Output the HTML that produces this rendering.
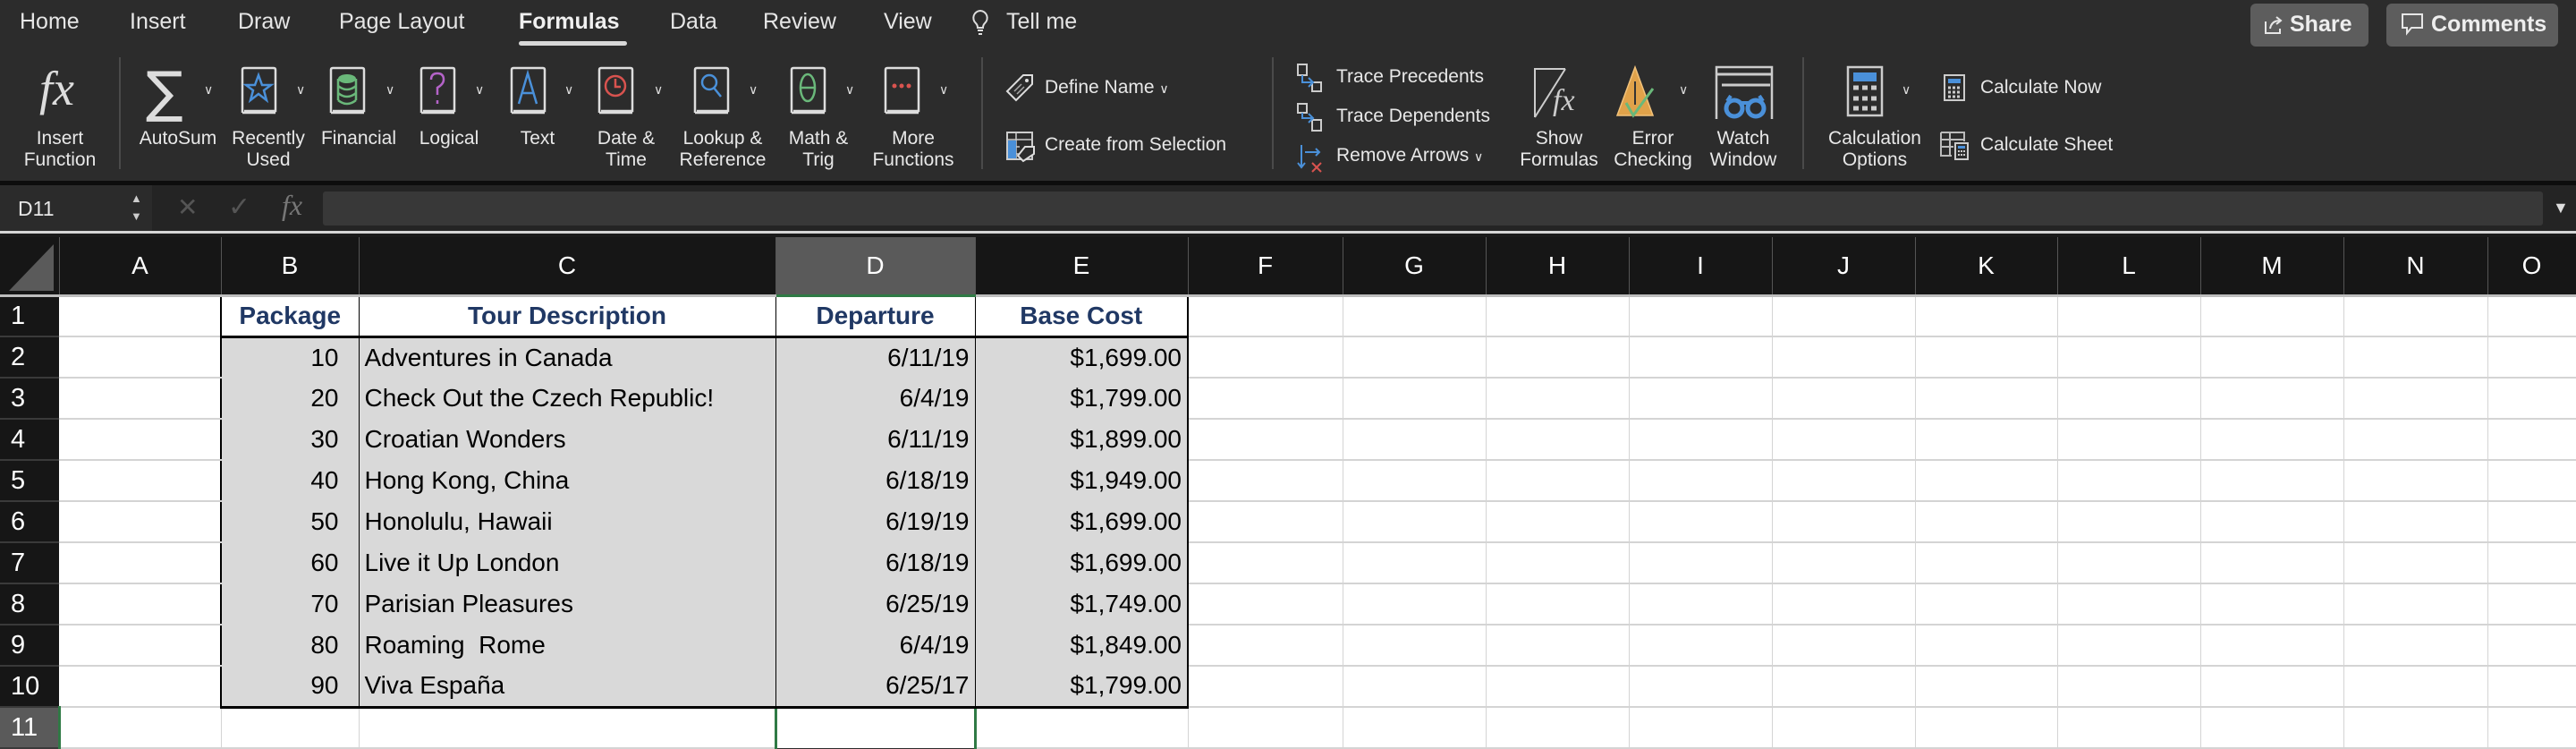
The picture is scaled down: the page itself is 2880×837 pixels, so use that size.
<!DOCTYPE html>
<html><head><meta charset="utf-8"><style>
*{margin:0;padding:0;box-sizing:border-box}
body{width:2880px;height:833px;overflow:hidden;background:#2c2c2c;font-family:"Liberation Sans",sans-serif;position:relative}
.a{position:absolute}
.tab{position:absolute;top:10px;font-size:25px;color:#e6e6e6;white-space:nowrap}
.lbl{position:absolute;font-size:21px;color:#e8e8e8;text-align:center;line-height:24px;white-space:nowrap;transform:translateX(-50%)}
.chev{position:absolute;font-size:14px;color:#ddd}
.sm{position:absolute;font-size:21px;color:#e8e8e8;white-space:nowrap}
.sep{position:absolute;width:2px;background:#4a4a4a;top:64px;height:125px}
table{position:absolute;left:0;top:265px;border-collapse:collapse;table-layout:fixed;width:2880px}
td{height:46px;border-right:1px solid #d4d4d4;border-bottom:2px solid #d4d4d4;background:#fff;font-size:28px;color:#000;padding:0 6px;white-space:nowrap;overflow:hidden}
tr.h td{height:65px;background:#161616;color:#fff;text-align:center;border-right:1px solid #555;border-bottom:3px solid #bdbdbd;font-size:28px}
td.rn{background:#161616;color:#fff;border-right:none;border-bottom:2px solid #3a3a3a;text-align:left;padding-left:12px;font-size:29px}
td.g{background:#d9d9d9;border-bottom:none}
td.r{text-align:right}
td.hd{color:#203864;font-weight:bold;text-align:center;border-bottom:3px solid #000}
</style></head><body>
<!-- tabs -->
<div class="tab" style="left:22px">Home</div>
<div class="tab" style="left:145px">Insert</div>
<div class="tab" style="left:266px">Draw</div>
<div class="tab" style="left:379px">Page Layout</div>
<div class="tab" style="left:580px;font-weight:bold;color:#f0f0f0">Formulas</div>
<div class="a" style="left:580px;top:46px;width:121px;height:5px;border-radius:3px;background:#d8d8d8"></div>
<div class="tab" style="left:749px">Data</div>
<div class="tab" style="left:853px">Review</div>
<div class="tab" style="left:988px">View</div>
<svg class="a" style="left:1085px;top:10px" width="22" height="32" viewBox="0 0 22 32"><path d="M11 2a8 8 0 0 0-5 14c1 1 2 3 2 5h6c0-2 1-4 2-5a8 8 0 0 0-5-14z" fill="none" stroke="#ddd" stroke-width="2"/><path d="M8 24h6M9 28h4" stroke="#ddd" stroke-width="2"/></svg>
<div class="tab" style="left:1125px">Tell me</div>
<div class="a" style="left:2516px;top:4px;width:132px;height:48px;background:#5d5d5d;border-radius:6px"></div>
<svg class="a" style="left:2530px;top:16px" width="24" height="24" viewBox="0 0 24 24"><path d="M3 8v13h16v-5M8 16c1-6 5-9 11-9M15 3l5 4-5 4" fill="none" stroke="#e6e6e6" stroke-width="2"/></svg>
<div class="a" style="left:2560px;top:13px;font-size:25px;font-weight:bold;color:#eee">Share</div>
<div class="a" style="left:2668px;top:4px;width:192px;height:48px;background:#5d5d5d;border-radius:6px"></div>
<svg class="a" style="left:2684px;top:14px" width="26" height="28" viewBox="0 0 26 28"><path d="M2 2h22v15H12l-5 6v-6H2z" fill="none" stroke="#e6e6e6" stroke-width="2"/></svg>
<div class="a" style="left:2718px;top:13px;font-size:25px;font-weight:bold;color:#eee">Comments</div>

<!-- ribbon icons -->
<div class="a" style="left:44px;top:68px;font-family:'Liberation Serif',serif;font-style:italic;font-size:54px;color:#ddd">fx</div>
<div class="lbl" style="left:67px;top:143px">Insert<br>Function</div>
<div class="sep" style="left:133px"></div>
<div class="a" style="left:163px;top:66px;font-size:62px;color:#ddd;font-family:'DejaVu Sans',sans-serif">∑</div>
<div class="chev" style="left:228px;top:92px">∨</div>
<div class="lbl" style="left:199px;top:143px">AutoSum</div>

<svg class="a" style="left:268px;top:74px" width="42" height="56" viewBox="0 0 42 56">
<path d="M3 52V4q0-2 2-2h33q2 0 2 2v46H5M3 52h37" fill="none" stroke="#ddd" stroke-width="2.5"/>
<path d="M21 10l4 11h10l-8 6 3 11-9-7-9 7 3-11-8-6h10z" fill="none" stroke="#4a90d9" stroke-width="2.5"/></svg>
<div class="chev" style="left:331px;top:92px">∨</div>
<div class="lbl" style="left:300px;top:143px">Recently<br>Used</div>

<svg class="a" style="left:367px;top:74px" width="42" height="56" viewBox="0 0 42 56">
<path d="M3 52V4q0-2 2-2h33q2 0 2 2v46H5M3 52h37" fill="none" stroke="#ddd" stroke-width="2.5"/>
<ellipse cx="21" cy="14" rx="10" ry="5" fill="#6ab87a"/><path d="M11 22q10 8 20 0M11 30q10 8 20 0M11 38q10 8 20 0M11 14v24M31 14v24" fill="none" stroke="#6ab87a" stroke-width="2.5"/></svg>
<div class="chev" style="left:431px;top:92px">∨</div>
<div class="lbl" style="left:401px;top:143px">Financial</div>

<svg class="a" style="left:468px;top:74px" width="42" height="56" viewBox="0 0 42 56">
<path d="M3 52V4q0-2 2-2h33q2 0 2 2v46H5M3 52h37" fill="none" stroke="#ddd" stroke-width="2.5"/>
<path d="M14 15q0-7 7-7t7 7q0 5-7 9v8M21 38v4" fill="none" stroke="#b463c8" stroke-width="2.5"/></svg>
<div class="chev" style="left:531px;top:92px">∨</div>
<div class="lbl" style="left:502px;top:143px">Logical</div>

<svg class="a" style="left:569px;top:74px" width="42" height="56" viewBox="0 0 42 56">
<path d="M3 52V4q0-2 2-2h33q2 0 2 2v46H5M3 52h37" fill="none" stroke="#ddd" stroke-width="2.5"/>
<path d="M11 42L21 8l10 34M14 30h14" fill="none" stroke="#4a90d9" stroke-width="2.5"/></svg>
<div class="chev" style="left:631px;top:92px">∨</div>
<div class="lbl" style="left:601px;top:143px">Text</div>

<svg class="a" style="left:667px;top:74px" width="42" height="56" viewBox="0 0 42 56">
<path d="M3 52V4q0-2 2-2h33q2 0 2 2v46H5M3 52h37" fill="none" stroke="#ddd" stroke-width="2.5"/>
<circle cx="21" cy="22" r="11" fill="none" stroke="#d9534f" stroke-width="2.5"/><path d="M21 14v9h6" fill="none" stroke="#d9534f" stroke-width="2.5"/></svg>
<div class="chev" style="left:731px;top:92px">∨</div>
<div class="lbl" style="left:700px;top:143px">Date &amp;<br>Time</div>

<svg class="a" style="left:774px;top:74px" width="42" height="56" viewBox="0 0 42 56">
<path d="M3 52V4q0-2 2-2h33q2 0 2 2v46H5M3 52h37" fill="none" stroke="#ddd" stroke-width="2.5"/>
<circle cx="19" cy="18" r="8" fill="none" stroke="#4a90d9" stroke-width="2.5"/><path d="M24 24l8 10" stroke="#4a90d9" stroke-width="2.5"/></svg>
<div class="chev" style="left:837px;top:92px">∨</div>
<div class="lbl" style="left:808px;top:143px">Lookup &amp;<br>Reference</div>

<svg class="a" style="left:882px;top:74px" width="42" height="56" viewBox="0 0 42 56">
<path d="M3 52V4q0-2 2-2h33q2 0 2 2v46H5M3 52h37" fill="none" stroke="#ddd" stroke-width="2.5"/>
<ellipse cx="21" cy="24" rx="8" ry="15" fill="none" stroke="#6ab87a" stroke-width="2.5"/><path d="M13 24h16" stroke="#6ab87a" stroke-width="2.5"/></svg>
<div class="chev" style="left:945px;top:92px">∨</div>
<div class="lbl" style="left:915px;top:143px">Math &amp;<br>Trig</div>

<svg class="a" style="left:987px;top:74px" width="42" height="56" viewBox="0 0 42 56">
<path d="M3 52V4q0-2 2-2h33q2 0 2 2v46H5M3 52h37" fill="none" stroke="#ddd" stroke-width="2.5"/>
<circle cx="13" cy="22" r="2.5" fill="#d9534f"/><circle cx="21" cy="22" r="2.5" fill="#d9534f"/><circle cx="29" cy="22" r="2.5" fill="#d9534f"/></svg>
<div class="chev" style="left:1050px;top:92px">∨</div>
<div class="lbl" style="left:1021px;top:143px">More<br>Functions</div>
<div class="sep" style="left:1097px"></div>

<svg class="a" style="left:1124px;top:80px" width="34" height="34" viewBox="0 0 34 34"><path d="M12 32L2 22 20 4h10v10z" fill="none" stroke="#ddd" stroke-width="2"/><circle cx="24" cy="10" r="2" fill="#ddd"/><path d="M10 22l8-8M13 25l8-8" stroke="#aaa" stroke-width="1.5"/></svg>
<div class="sm" style="left:1168px;top:86px">Define Name <span style="font-size:14px">∨</span></div>
<svg class="a" style="left:1124px;top:146px" width="36" height="36" viewBox="0 0 36 36"><rect x="2" y="2" width="28" height="30" fill="none" stroke="#ccc" stroke-width="2"/><path d="M2 10h28M2 18h14M2 26h14M12 2v30" stroke="#ccc" stroke-width="1.5"/><rect x="3" y="11" width="9" height="20" fill="#4a90d9"/><path d="M20 34l-6-6 8-10h10v8z" fill="#2c2c2c" stroke="#ddd" stroke-width="2"/></svg>
<div class="sm" style="left:1168px;top:150px">Create from Selection</div>
<div class="sep" style="left:1422px"></div>

<svg class="a" style="left:1449px;top:70px" width="32" height="34" viewBox="0 0 32 34"><rect x="2" y="2" width="10" height="12" fill="none" stroke="#ccc" stroke-width="2"/><rect x="18" y="22" width="10" height="10" fill="none" stroke="#ccc" stroke-width="2"/><path d="M7 14v8h12M14 17l5 5-5 5" fill="none" stroke="#4a90d9" stroke-width="2"/></svg>
<div class="sm" style="left:1494px;top:74px">Trace Precedents</div>
<svg class="a" style="left:1449px;top:114px" width="32" height="34" viewBox="0 0 32 34"><rect x="2" y="2" width="10" height="10" fill="none" stroke="#ccc" stroke-width="2"/><rect x="18" y="20" width="10" height="12" fill="none" stroke="#ccc" stroke-width="2"/><path d="M7 12v6h12M14 13l5 5-5 5" fill="none" stroke="#4a90d9" stroke-width="2"/></svg>
<div class="sm" style="left:1494px;top:118px">Trace Dependents</div>
<svg class="a" style="left:1449px;top:158px" width="32" height="36" viewBox="0 0 32 36"><path d="M6 4v24M2 24l4 5 4-5M10 12h16M22 8l4 4-4 4" fill="none" stroke="#4a90d9" stroke-width="2"/><path d="M18 24l10 10M28 24L18 34" stroke="#d9534f" stroke-width="2"/></svg>
<div class="sm" style="left:1494px;top:162px">Remove Arrows <span style="font-size:14px">∨</span></div>

<svg class="a" style="left:1714px;top:73px" width="58" height="62" viewBox="0 0 58 62"><path d="M2 58V4h34M2 58L36 4" fill="none" stroke="#ccc" stroke-width="2"/><text x="22" y="50" font-family="Liberation Serif" font-style="italic" font-size="34" fill="#ccc">fx</text></svg>
<div class="lbl" style="left:1743px;top:143px">Show<br>Formulas</div>
<svg class="a" style="left:1806px;top:73px" width="62" height="62" viewBox="0 0 62 62"><path d="M22 2L2 56h40z" fill="#e0a24a" stroke="#f2c27a" stroke-width="1.5"/><path d="M22 18v26" stroke="#333" stroke-width="2"/><path d="M12 42l8 14L42 26" fill="none" stroke="#6ab87a" stroke-width="3"/></svg>
<div class="chev" style="left:1877px;top:92px">∨</div>
<div class="lbl" style="left:1848px;top:143px">Error<br>Checking</div>
<svg class="a" style="left:1917px;top:73px" width="66" height="62" viewBox="0 0 66 62"><path d="M2 60V2h62v58" fill="none" stroke="#ccc" stroke-width="2.5"/><path d="M2 10h62M8 22h54" stroke="#ccc" stroke-width="3"/><circle cx="22" cy="48" r="9" fill="none" stroke="#4a90d9" stroke-width="5"/><circle cx="46" cy="48" r="9" fill="none" stroke="#4a90d9" stroke-width="5"/><path d="M28 42h12M14 40l4-6M54 40l-4-6" stroke="#4a90d9" stroke-width="4"/></svg>
<div class="lbl" style="left:1949px;top:143px">Watch<br>Window</div>
<div class="sep" style="left:2015px"></div>

<svg class="a" style="left:2064px;top:73px" width="42" height="58" viewBox="0 0 42 58"><rect x="2" y="2" width="38" height="54" fill="none" stroke="#ccc" stroke-width="2.5"/><rect x="8" y="8" width="26" height="10" fill="#4a90d9"/><path d="M8 25h6M18 25h6M28 25h6M8 37h6M18 37h6M28 37h6M8 48h6M18 48h6M28 48h6" stroke="#ccc" stroke-width="5"/></svg>
<div class="chev" style="left:2126px;top:92px">∨</div>
<div class="lbl" style="left:2096px;top:143px">Calculation<br>Options</div>
<svg class="a" style="left:2172px;top:82px" width="26" height="32" viewBox="0 0 26 32"><rect x="2" y="2" width="22" height="28" fill="none" stroke="#ccc" stroke-width="2"/><rect x="6" y="6" width="14" height="5" fill="#4a90d9"/><path d="M6 16h14M6 21h14M6 26h14" stroke="#ccc" stroke-width="3" stroke-dasharray="3 2"/></svg>
<div class="sm" style="left:2214px;top:86px">Calculate Now</div>
<svg class="a" style="left:2168px;top:146px" width="34" height="34" viewBox="0 0 34 34"><path d="M2 2h26v10M2 2v26h12M2 10h26M2 18h14M12 2v26" fill="none" stroke="#bbb" stroke-width="2"/><rect x="18" y="14" width="14" height="18" fill="#2c2c2c" stroke="#ccc" stroke-width="2"/><rect x="21" y="17" width="8" height="3" fill="#4a90d9"/><path d="M21 23h8M21 27h8" stroke="#ccc" stroke-width="2" stroke-dasharray="2 1"/></svg>
<div class="sm" style="left:2214px;top:150px">Calculate Sheet</div>

<!-- separator line -->
<div class="a" style="left:0;top:202px;width:2880px;height:5px;background:#0d0d0d"></div>
<!-- formula bar -->
<div class="a" style="left:0;top:207px;width:2880px;height:52px;background:#242424"></div>
<div class="a" style="left:0;top:207px;width:170px;height:52px;background:#2b2b2b"></div>
<div class="a" style="left:20px;top:220px;font-size:23px;color:#e6e6e6">D11</div>
<div class="a" style="left:146px;top:212px;font-size:13px;color:#ccc;line-height:20px">▲<br>▼</div>
<div class="a" style="left:198px;top:215px;font-size:28px;color:#555">✕</div>
<div class="a" style="left:255px;top:214px;font-size:30px;color:#555">✓</div>
<div class="a" style="left:315px;top:211px;font-family:'Liberation Serif',serif;font-style:italic;font-size:32px;color:#777">fx</div>
<div class="a" style="left:361px;top:214px;width:2482px;height:38px;background:#383838;border-radius:3px"></div>
<div class="a" style="left:2854px;top:222px;font-size:18px;color:#ddd">▼</div>
<div class="a" style="left:0;top:258px;width:2880px;height:3px;background:#d6d6d6"></div>
<div class="a" style="left:0;top:261px;width:2880px;height:4px;background:#1a1a1a"></div>

<table>
<colgroup><col style="width:66px"><col style="width:181px"><col style="width:154px"><col style="width:466px"><col style="width:223px"><col style="width:238px"><col style="width:173px"><col style="width:160px"><col style="width:160px"><col style="width:160px"><col style="width:160px"><col style="width:159px"><col style="width:160px"><col style="width:160px"><col style="width:161px"><col style="width:99px"></colgroup>
<tr class="h"><td style="position:relative"><svg style="position:absolute;left:10px;top:8px" width="50" height="52"><path d="M50 0V52H0z" fill="#5a5a5a"/></svg></td><td>A</td><td>B</td><td>C</td><td style="background:#5a5a5a;border-bottom:3px solid #2f7a45">D</td><td>E</td><td>F</td><td>G</td><td>H</td><td>I</td><td>J</td><td>K</td><td>L</td><td>M</td><td>N</td><td>O</td></tr>
<tr><td class="rn">1</td><td></td><td class="hd" style="border-left:2px solid #000;border-top:2px solid #000;border-right:1px solid #000">Package</td><td class="hd" style="border-top:2px solid #000;border-right:1px solid #000">Tour Description</td><td class="hd" style="border-top:2px solid #000;border-right:1px solid #000">Departure</td><td class="hd" style="border-top:2px solid #000;border-right:2px solid #000">Base Cost</td><td></td><td></td><td></td><td></td><td></td><td></td><td></td><td></td><td></td><td></td></tr>
<tr><td class="rn">2</td><td></td><td class="g r" style="border-left:2px solid #000;border-right:1px solid #000;padding-right:22px">10</td><td class="g" style="border-right:1px solid #000">Adventures in Canada</td><td class="g r" style="border-right:1px solid #000">6/11/19</td><td class="g r" style="border-right:2px solid #000">$1,699.00</td><td></td><td></td><td></td><td></td><td></td><td></td><td></td><td></td><td></td><td></td></tr>
<tr><td class="rn">3</td><td></td><td class="g r" style="border-left:2px solid #000;border-right:1px solid #000;padding-right:22px">20</td><td class="g" style="border-right:1px solid #000">Check Out the Czech Republic!</td><td class="g r" style="border-right:1px solid #000">6/4/19</td><td class="g r" style="border-right:2px solid #000">$1,799.00</td><td></td><td></td><td></td><td></td><td></td><td></td><td></td><td></td><td></td><td></td></tr>
<tr><td class="rn">4</td><td></td><td class="g r" style="border-left:2px solid #000;border-right:1px solid #000;padding-right:22px">30</td><td class="g" style="border-right:1px solid #000">Croatian Wonders</td><td class="g r" style="border-right:1px solid #000">6/11/19</td><td class="g r" style="border-right:2px solid #000">$1,899.00</td><td></td><td></td><td></td><td></td><td></td><td></td><td></td><td></td><td></td><td></td></tr>
<tr><td class="rn">5</td><td></td><td class="g r" style="border-left:2px solid #000;border-right:1px solid #000;padding-right:22px">40</td><td class="g" style="border-right:1px solid #000">Hong Kong, China</td><td class="g r" style="border-right:1px solid #000">6/18/19</td><td class="g r" style="border-right:2px solid #000">$1,949.00</td><td></td><td></td><td></td><td></td><td></td><td></td><td></td><td></td><td></td><td></td></tr>
<tr><td class="rn">6</td><td></td><td class="g r" style="border-left:2px solid #000;border-right:1px solid #000;padding-right:22px">50</td><td class="g" style="border-right:1px solid #000">Honolulu, Hawaii</td><td class="g r" style="border-right:1px solid #000">6/19/19</td><td class="g r" style="border-right:2px solid #000">$1,699.00</td><td></td><td></td><td></td><td></td><td></td><td></td><td></td><td></td><td></td><td></td></tr>
<tr><td class="rn">7</td><td></td><td class="g r" style="border-left:2px solid #000;border-right:1px solid #000;padding-right:22px">60</td><td class="g" style="border-right:1px solid #000">Live it Up London</td><td class="g r" style="border-right:1px solid #000">6/18/19</td><td class="g r" style="border-right:2px solid #000">$1,699.00</td><td></td><td></td><td></td><td></td><td></td><td></td><td></td><td></td><td></td><td></td></tr>
<tr><td class="rn">8</td><td></td><td class="g r" style="border-left:2px solid #000;border-right:1px solid #000;padding-right:22px">70</td><td class="g" style="border-right:1px solid #000">Parisian Pleasures</td><td class="g r" style="border-right:1px solid #000">6/25/19</td><td class="g r" style="border-right:2px solid #000">$1,749.00</td><td></td><td></td><td></td><td></td><td></td><td></td><td></td><td></td><td></td><td></td></tr>
<tr><td class="rn">9</td><td></td><td class="g r" style="border-left:2px solid #000;border-right:1px solid #000;padding-right:22px">80</td><td class="g" style="border-right:1px solid #000">Roaming&nbsp; Rome</td><td class="g r" style="border-right:1px solid #000">6/4/19</td><td class="g r" style="border-right:2px solid #000">$1,849.00</td><td></td><td></td><td></td><td></td><td></td><td></td><td></td><td></td><td></td><td></td></tr>
<tr><td class="rn">10</td><td></td><td class="g r" style="border-left:2px solid #000;border-right:1px solid #000;border-bottom:3px solid #000;padding-right:22px">90</td><td class="g" style="border-right:1px solid #000;border-bottom:3px solid #000">Viva España</td><td class="g r" style="border-right:1px solid #000;border-bottom:3px solid #000">6/25/17</td><td class="g r" style="border-right:2px solid #000;border-bottom:3px solid #000">$1,799.00</td><td></td><td></td><td></td><td></td><td></td><td></td><td></td><td></td><td></td><td></td></tr>
<tr><td class="rn" style="background:#5a5a5a;border-right:3px solid #2f7a45">11</td><td></td><td></td><td></td><td style="border:3px solid #2f7a45;border-bottom:none"></td><td></td><td></td><td></td><td></td><td></td><td></td><td></td><td></td><td></td><td></td><td></td></tr>
</table>
</body></html>
